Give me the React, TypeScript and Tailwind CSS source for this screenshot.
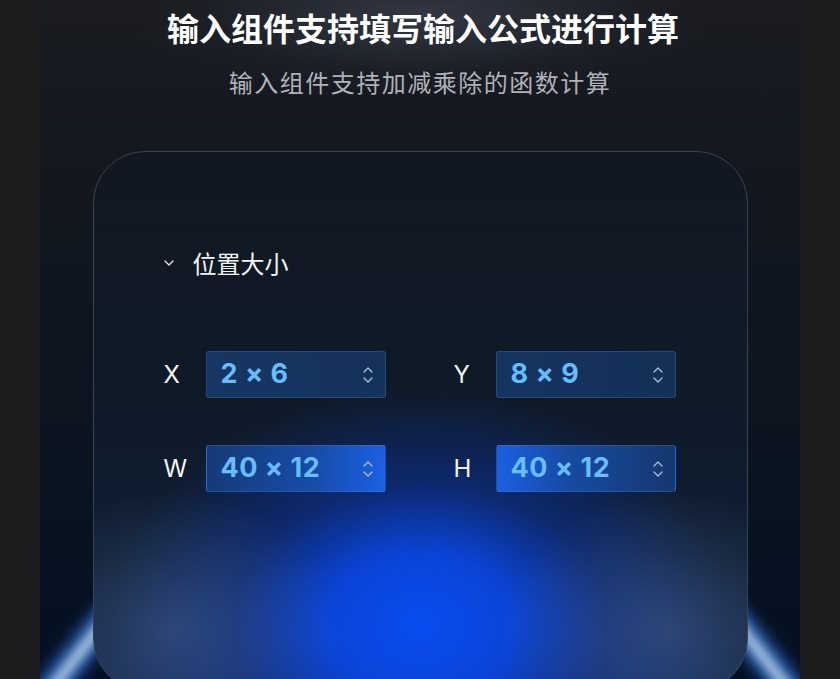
import { Fragment } from "react";

const fields = [
  { label: "X", value: "2 × 6", tone: "bg-[linear-gradient(90deg,rgba(24,60,110,0.85),rgba(22,56,102,0.8))]" },
  { label: "Y", value: "8 × 9", tone: "bg-[linear-gradient(90deg,rgba(22,58,106,0.85),rgba(22,54,98,0.8))]" },
  { label: "W", value: "40 × 12", tone: "bg-[linear-gradient(90deg,rgba(22,62,125,0.9),rgba(24,80,175,0.92)_60%,rgba(28,100,235,0.95))]" },
  { label: "H", value: "40 × 12", tone: "bg-[linear-gradient(90deg,rgba(28,100,235,0.95),rgba(24,78,170,0.92)_40%,rgba(22,60,118,0.9))]" },
];

function Stepper() {
  return (
    <svg width="14" height="24" viewBox="0 0 14 24" fill="none" className="shrink-0">
      <path d="M3 9 L7 5 L11 9" stroke="#a9bfdc" strokeWidth="1.3" strokeLinecap="round" strokeLinejoin="round" />
      <path d="M3 15 L7 19 L11 15" stroke="#a9bfdc" strokeWidth="1.3" strokeLinecap="round" strokeLinejoin="round" />
    </svg>
  );
}

export default function App() {
  return (
    <div className="flex h-[679px] w-[840px] justify-center overflow-hidden bg-[#1c1c1e] font-['Noto_Sans_CJK_SC',sans-serif]">
      <div className="relative flex w-[760px] flex-col items-center overflow-hidden bg-[linear-gradient(180deg,#1a1c21_0%,#12171f_30%,#0a1420_70%,#031024_100%)]">
        {/* soft light behind the title */}
        <div className="pointer-events-none absolute left-1/2 top-[-60px] h-[150px] w-[560px] -translate-x-1/2 rounded-full bg-[radial-gradient(ellipse_at_center,rgba(70,78,95,0.55),rgba(40,44,54,0.2)_55%,transparent_75%)]" />
        {/* light streaks at the card's bottom corners */}
        <div className="pointer-events-none absolute bottom-[-40px] left-[16px] h-[130px] w-[44px] rotate-[38deg] rounded-full bg-[linear-gradient(90deg,transparent,rgba(50,130,255,0.55)_30%,rgba(215,238,255,0.95)_52%,rgba(50,130,255,0.55)_72%,transparent)] blur-[5px]" />
        <div className="pointer-events-none absolute bottom-[-40px] right-[16px] h-[130px] w-[44px] -rotate-[38deg] rounded-full bg-[linear-gradient(90deg,transparent,rgba(50,130,255,0.55)_28%,rgba(215,238,255,0.95)_48%,rgba(50,130,255,0.55)_70%,transparent)] blur-[5px]" />

        <h1 className="relative ml-[6px] mt-[6px] text-[32px] font-bold leading-[42px] text-white">
          输入组件支持填写输入公式进行计算
        </h1>
        <p className="relative mt-[18px] text-[24px] leading-[32px] tracking-[1.5px] text-[#aeb2b9]">
          输入组件支持加减乘除的函数计算
        </p>

        <div className="relative mt-[53px] h-[540px] w-[655px] shrink-0 overflow-hidden rounded-[52px] border border-[#3a4250] bg-[linear-gradient(180deg,#111821_0%,#0f1a28_45%,#0f1e34_75%,#13284e_100%)]">
          <div className="pointer-events-none absolute bottom-[-170px] left-1/2 h-[470px] w-[620px] -translate-x-1/2 bg-[radial-gradient(ellipse_closest-side_at_center,#0a4cf0_0%,rgba(10,72,232,0.9)_30%,rgba(12,52,170,0.5)_60%,transparent_100%)]" />
          <div className="pointer-events-none absolute bottom-[-80px] left-[-90px] h-[280px] w-[340px] bg-[radial-gradient(ellipse_closest-side_at_center,rgba(90,115,160,0.4),transparent)]" />
          <div className="pointer-events-none absolute bottom-[-80px] right-[-90px] h-[280px] w-[340px] bg-[radial-gradient(ellipse_closest-side_at_center,rgba(90,115,160,0.4),transparent)]" />

          <div className="relative flex flex-col pl-[70px] pt-[95px]">
            <div className="flex items-center gap-[19px]">
              <svg width="10" height="6" viewBox="0 0 10 6" fill="none">
                <path d="M1 1 L5 5 L9 1" stroke="#e6e9ee" strokeWidth="1.3" strokeLinecap="round" strokeLinejoin="round" />
              </svg>
              <span className="text-[24px] leading-[32px] text-[#f2f4f7]">位置大小</span>
            </div>

            <div className="mt-[72px] grid grid-cols-[42px_180px_68px_42px_180px] gap-y-[47px]">
              {fields.map((f, i) => (
                <Fragment key={f.label}>
                  <span className="flex items-center font-['Inter',sans-serif] text-[24px] text-[#f2f4f7]">
                    {f.label}
                  </span>
                  <div
                    className={`flex h-[47px] items-center justify-between rounded-[3px] border border-[rgba(80,130,200,0.3)] pl-[14px] pr-[10px] ${f.tone}`}
                  >
                    <span className="font-['Inter',sans-serif] text-[27px] font-bold tracking-[0.5px] text-[#66bdff]">
                      {f.value}
                    </span>
                    <Stepper />
                  </div>
                  {i % 2 === 0 && <span />}
                </Fragment>
              ))}
            </div>
          </div>
        </div>
      </div>
    </div>
  );
}
